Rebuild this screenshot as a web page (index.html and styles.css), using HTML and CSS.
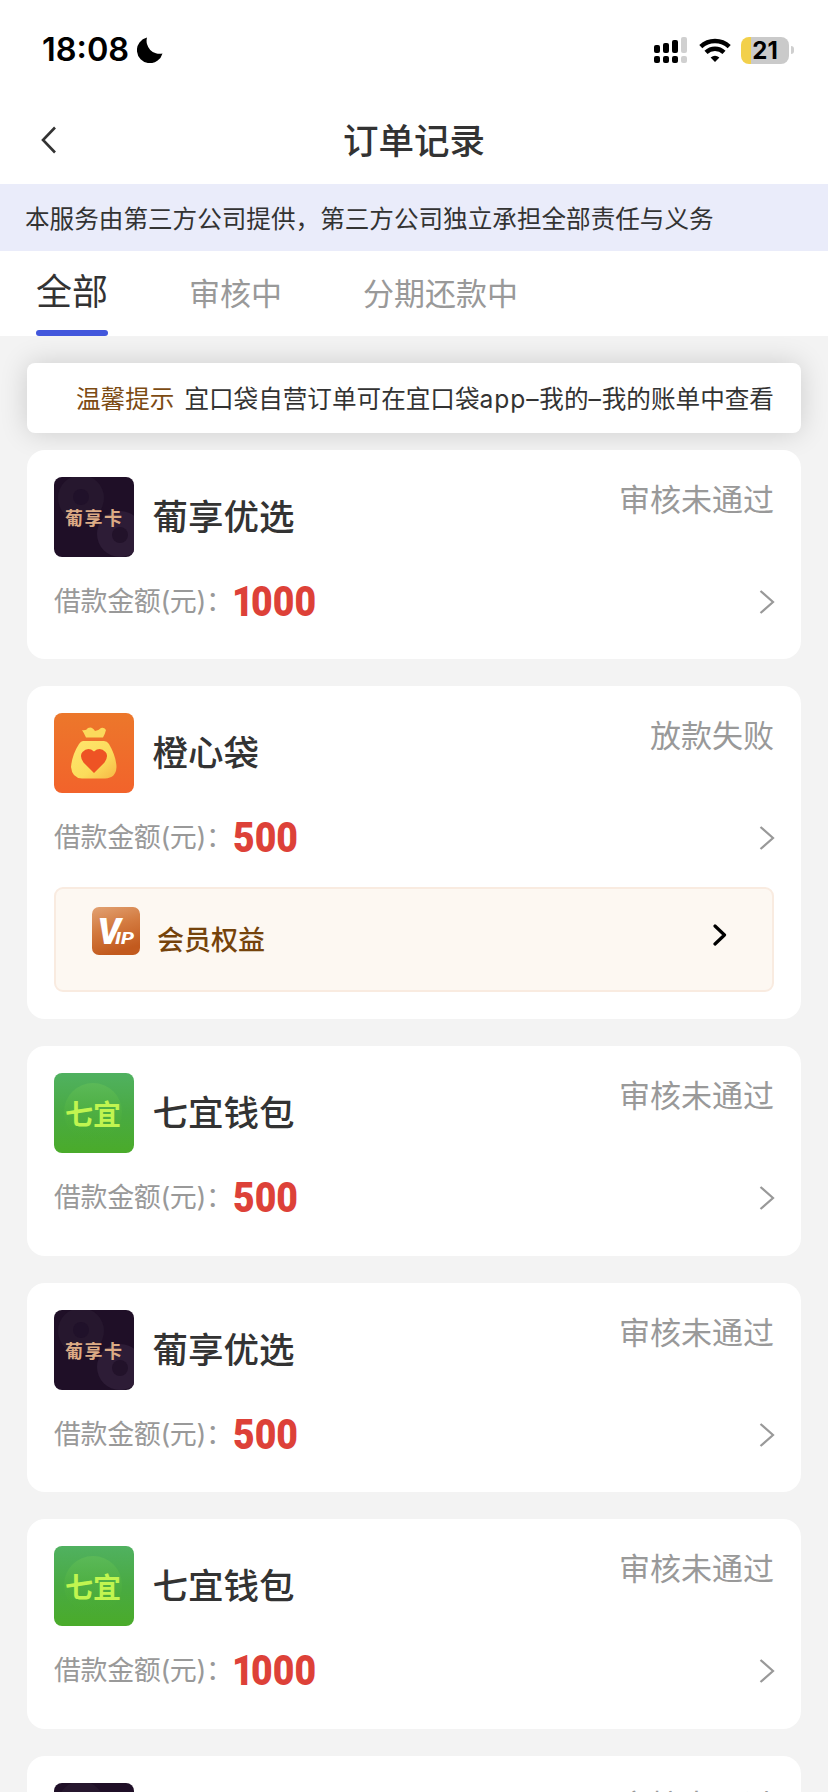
FILE: index.html
```html
<!DOCTYPE html>
<html lang="zh-CN">
<head>
<meta charset="utf-8">
<title>订单记录</title>
<link rel="stylesheet" href="styles.css">
</head>
<body>
<svg class="defs" aria-hidden="true">
  <defs>
    <linearGradient id="g-orange" x1="0" y1="0" x2="0" y2="1"><stop offset="0" stop-color="#ec772b"/><stop offset="1" stop-color="#f2632b"/></linearGradient>
    <linearGradient id="g-bag" x1="0" y1="0" x2="1" y2="1"><stop offset="0" stop-color="#ffe56e"/><stop offset=".6" stop-color="#fbdc5b"/><stop offset="1" stop-color="#f7b745"/></linearGradient>
    <linearGradient id="g-green" x1="0" y1="0" x2="0" y2="1"><stop offset="0" stop-color="#50b160"/><stop offset=".5" stop-color="#49aa42"/><stop offset="1" stop-color="#4aab2a"/></linearGradient>
    <linearGradient id="g-disc" x1="0" y1="0" x2="0" y2="1"><stop offset="0" stop-color="#5bb958"/><stop offset="1" stop-color="#4aad2c" stop-opacity="0"/></linearGradient>
    <linearGradient id="g-vip" x1="0" y1="0" x2=".3" y2="1"><stop offset="0" stop-color="#e2a273"/><stop offset=".5" stop-color="#d37a3f"/><stop offset="1" stop-color="#c25a1e"/></linearGradient>
  </defs>
  <symbol id="bg-puxiang" viewBox="0 0 80 80">
    <rect width="80" height="80" fill="#1f0f27"/>
    <circle cx="27" cy="21" r="23" fill="#26172e"/>
    <circle cx="27" cy="20" r="8" fill="#20112a"/>
    <circle cx="66" cy="57" r="23" fill="#2d1c36"/>
    <circle cx="66" cy="58" r="8" fill="#22122a"/>
  </symbol>
  <symbol id="bg-qiyi" viewBox="0 0 80 80">
    <rect width="80" height="80" fill="url(#g-green)"/>
    <circle cx="39" cy="39" r="29" fill="url(#g-disc)"/>
  </symbol>
  <symbol id="logo-bag" viewBox="0 0 80 80">
    <rect width="80" height="80" fill="url(#g-orange)"/>
    <path d="M28 17 Q32 18 34 15 Q38 13 41 18 Q44 18 47 15 Q50 14 52 17 Q51 21 49 24.500 H32 Q30 20 28 17Z" fill="#fbd95c"/>
    <path d="M29 28 H50 Q53 28 55 31 Q62 43 62.500 54 Q62 65 51 65.500 H28 Q18 65 17 54 Q18 42 25 31 Q27 28 29 28Z" fill="url(#g-bag)"/>
    <path d="M40 60 L29.500 49.500 Q25 43 28.500 39 Q34 33.500 40 38.500 Q46 33.500 51.500 39 Q55 43 50.500 49.500Z" fill="#ee5324"/>
  </symbol>
  <symbol id="chevron" viewBox="0 0 16 24"><path d="M1.500 1 L14 12 L1.500 23" fill="none" stroke="currentColor" stroke-width="2.200"/></symbol>
</svg>

<div class="status-bar">
  <span class="time">18:08</span>
  <svg class="moon" viewBox="0 0 26 26"><path d="M10 .5 A13 13 0 1 0 25.500 16.500 A13 13 0 0 1 10 .5Z" fill="#000"/></svg>
  <svg class="signal" viewBox="0 0 34 28">
    <g fill="#000"><rect x="0" y="9" width="6" height="8" rx="2"/><rect x="9" y="7" width="6" height="10" rx="2"/><rect x="18" y="4" width="6" height="13" rx="2"/><rect x="0" y="20" width="6" height="7" rx="2"/><rect x="9" y="20" width="6" height="7" rx="2"/><rect x="18" y="20" width="6" height="7" rx="2"/></g>
    <g fill="#d0d0d0"><rect x="27" y="1" width="6" height="16" rx="2"/><rect x="27" y="20" width="6" height="7" rx="2"/></g>
  </svg>
  <svg class="wifi" viewBox="0 0 32 25"><g fill="none" stroke="#000" stroke-width="4.400"><path d="M1.800 8.700 A20.500 20.500 0 0 1 30.200 8.700"/><path d="M7 14.300 A13 13 0 0 1 25 14.300"/></g><path d="M16 24 L11.600 19.600 Q16 16 20.400 19.600Z" fill="#000"/></svg>
  <span class="battery">21</span><span class="battery-cap"></span>
</div>

<header class="nav">
  <svg class="back" viewBox="0 0 16 28"><path d="M14 1.500 L2 14 L14 26.500" fill="none" stroke="#333" stroke-width="2.600"/></svg>
  <h1 class="title">订单记录</h1>
</header>

<div class="notice">本服务由第三方公司提供，第三方公司独立承担全部责任与义务</div>

<nav class="tabs">
  <span class="tab tab-active">全部</span>
  <span class="tab">审核中</span>
  <span class="tab">分期还款中</span>
</nav>

<main class="content">
  <div class="tip"><span class="tip-label">温馨提示</span><span>宜口袋自营订单可在宜口袋<span class="latin">app–</span>我的<span class="latin">–</span>我的账单中查看</span></div>

  <section class="card">
    <div class="card-head"><svg class="logo" viewBox="0 0 80 80"><use href="#bg-puxiang"/><text x="11" y="48" class="logo-gold">葡享卡</text></svg><h2 class="name">葡享优选</h2><span class="status">审核未通过</span></div>
    <div class="card-row"><span class="label">借款金额(元)：</span><span class="amount"><span class="one">1</span>000</span><svg class="arrow"><use href="#chevron"/></svg></div>
  </section>

  <section class="card card-vip">
    <div class="card-head"><svg class="logo"><use href="#logo-bag"/></svg><h2 class="name">橙心袋</h2><span class="status">放款失败</span></div>
    <div class="card-row"><span class="label">借款金额(元)：</span><span class="amount">500</span><svg class="arrow"><use href="#chevron"/></svg></div>
    <div class="vip">
      <svg class="vip-icon" viewBox="0 0 48 48"><rect width="48" height="48" rx="7" fill="url(#g-vip)"/><text x="5.500" y="37" class="vip-v">V</text><text x="23" y="37" class="vip-ip" textLength="19" lengthAdjust="spacingAndGlyphs">IP</text></svg>
      <span class="vip-text">会员权益</span>
      <svg class="vip-arrow" viewBox="0 0 14 22"><path d="M2 2 L11.500 11 L2 20" fill="none" stroke="#000" stroke-width="3.200" stroke-linecap="round" stroke-linejoin="round"/></svg>
    </div>
  </section>

  <section class="card">
    <div class="card-head"><svg class="logo" viewBox="0 0 80 80"><use href="#bg-qiyi"/><text x="11" y="52" class="logo-lime">七宜</text></svg><h2 class="name">七宜钱包</h2><span class="status">审核未通过</span></div>
    <div class="card-row"><span class="label">借款金额(元)：</span><span class="amount">500</span><svg class="arrow"><use href="#chevron"/></svg></div>
  </section>

  <section class="card">
    <div class="card-head"><svg class="logo" viewBox="0 0 80 80"><use href="#bg-puxiang"/><text x="11" y="48" class="logo-gold">葡享卡</text></svg><h2 class="name">葡享优选</h2><span class="status">审核未通过</span></div>
    <div class="card-row"><span class="label">借款金额(元)：</span><span class="amount">500</span><svg class="arrow"><use href="#chevron"/></svg></div>
  </section>

  <section class="card">
    <div class="card-head"><svg class="logo" viewBox="0 0 80 80"><use href="#bg-qiyi"/><text x="11" y="52" class="logo-lime">七宜</text></svg><h2 class="name">七宜钱包</h2><span class="status">审核未通过</span></div>
    <div class="card-row"><span class="label">借款金额(元)：</span><span class="amount"><span class="one">1</span>000</span><svg class="arrow"><use href="#chevron"/></svg></div>
  </section>

  <section class="card card-last">
    <div class="card-head"><svg class="logo" viewBox="0 0 80 80"><use href="#bg-puxiang"/></svg><span class="status">审核未通过</span></div>
  </section>
</main>
</body>
</html>
```
FILE: styles.css
```css
* { box-sizing: border-box; }

body {
  margin: 0;
  width: 828px;
  height: 1792px;
  overflow: hidden;
  display: flex;
  flex-direction: column;
  background: #f3f3f3;
  color: #333;
  font-family: Inter, "Noto Sans CJK SC", sans-serif;
}

h1, h2 { margin: 0; font-weight: 500; }

.defs { position: absolute; width: 0; height: 0; }

/* status bar */
.status-bar {
  flex: none;
  height: 100px;
  padding: 0 34px 0 42px;
  display: flex;
  align-items: center;
  background: #fff;
  color: #000;
}
.time { font-size: 32.5px; font-weight: 600; line-height: 100px; }
.moon { width: 26px; height: 26px; margin-left: 8px; }
.signal { width: 34px; height: 28px; margin-left: auto; }
.wifi { width: 32px; height: 25px; margin: 0 10px 0 11px; }
.battery {
  width: 48px;
  height: 27px;
  border-radius: 8px;
  background: linear-gradient(90deg, #f2d04b 0 10px, #cacaca 10px);
  font-size: 24px;
  font-weight: 700;
  line-height: 27px;
  text-align: center;
}
.battery-cap { width: 3px; height: 8px; margin-left: 2px; border-radius: 0 3px 3px 0; background: #cfcfcf; }

/* navigation */
.nav {
  flex: none;
  height: 84px;
  padding: 0 41px;
  display: grid;
  grid-template-columns: 16px 1fr 16px;
  align-items: center;
  background: #fff;
}
.back { width: 16px; height: 28px; margin-bottom: 4px; }
.title { font-size: 35.5px; line-height: 80px; text-align: center; }

.notice {
  flex: none;
  height: 67px;
  padding-left: 25px;
  background: #eaecfa;
  font-size: 24.6px;
  line-height: 70px;
  white-space: nowrap;
}

.tabs {
  flex: none;
  height: 85px;
  padding-left: 36px;
  display: flex;
  background: #fff;
}
.tab { margin-right: 81px; color: #999; font-size: 31px; line-height: 86px; white-space: nowrap; }
.tab-active {
  height: 85px;
  display: flex;
  flex-direction: column;
  color: #333;
  font-size: 36px;
  line-height: 83px;
}
.tab-active::after {
  content: "";
  height: 6px;
  margin-top: -4px;
  border-radius: 3px;
  background: #4257dc;
}

/* list */
.content { padding: 27px 27px 0; display: flex; flex-direction: column; flex: 1; min-height: 0; overflow: hidden; }
.tip {
  flex: none;
  height: 70px;
  margin-bottom: 17px;
  padding-left: 49px;
  display: flex;
  gap: 10px;
  border-radius: 8px;
  background: #fff;
  box-shadow: 0 0 28px rgba(0, 0, 0, .16);
  font-size: 24.6px;
  line-height: 72px;
  white-space: nowrap;
}
.tip-label { color: #7c4b13; }
.latin { letter-spacing: .9px; }

.card {
  position: relative;
  flex: none;
  height: 209.4px;
  margin-bottom: 27px;
  padding: 27px 27px 0;
  border-radius: 18px;
  background: #fff;
}
.card-vip { height: 333px; }
.card-last { height: 37px; margin-bottom: 0; border-radius: 18px 18px 0 0; }
.card-head { height: 80px; display: flex; align-items: flex-start; }
.logo { width: 80px; height: 80px; border-radius: 8px; }
.name { margin-left: 18.5px; font-size: 35.5px; line-height: 81px; }
.status { margin-left: auto; color: #999; font-size: 31px; line-height: 46px; }
.card-row { height: 90px; display: flex; align-items: center; }
.label { width: 179px; color: #999; font-size: 27px; letter-spacing: -.4px; line-height: 94px; white-space: nowrap; }
.amount {
  color: #dd4138;
  font-family: Roboto, sans-serif;
  font-size: 42px;
  font-weight: 900;
  line-height: 94px;
  transform: scaleX(.89);
  transform-origin: left;
}
.one { margin: 0 -3px 0 -1px; }
.arrow { width: 16px; height: 24px; margin: 0 -1px 0 auto; color: #999; }

.vip {
  height: 105px;
  margin-top: 4px;
  padding: 0 45px 0 36px;
  display: flex;
  align-items: flex-start;
  border: 2px solid #f9ebe0;
  border-radius: 9px;
  background: #fdf8f2;
}
.vip-icon { width: 48px; height: 48px; margin-top: 18px; }
.vip-text { margin-left: 17px; color: #75430b; font-size: 27px; font-weight: 500; line-height: 103px; }
.vip-arrow { width: 14px; height: 22px; margin: 35px 0 0 auto; }
.vip-v { font: italic 900 36px Roboto, sans-serif; fill: #fff; }
.vip-ip { font: italic 800 17px Roboto, sans-serif; fill: #fff; }
.logo-gold { font: 700 18px "Noto Sans CJK SC", sans-serif; letter-spacing: 1.5px; fill: #dcab85; }
.logo-lime { font: 700 28px "Noto Sans CJK SC", sans-serif; fill: #c0f550; }
```
